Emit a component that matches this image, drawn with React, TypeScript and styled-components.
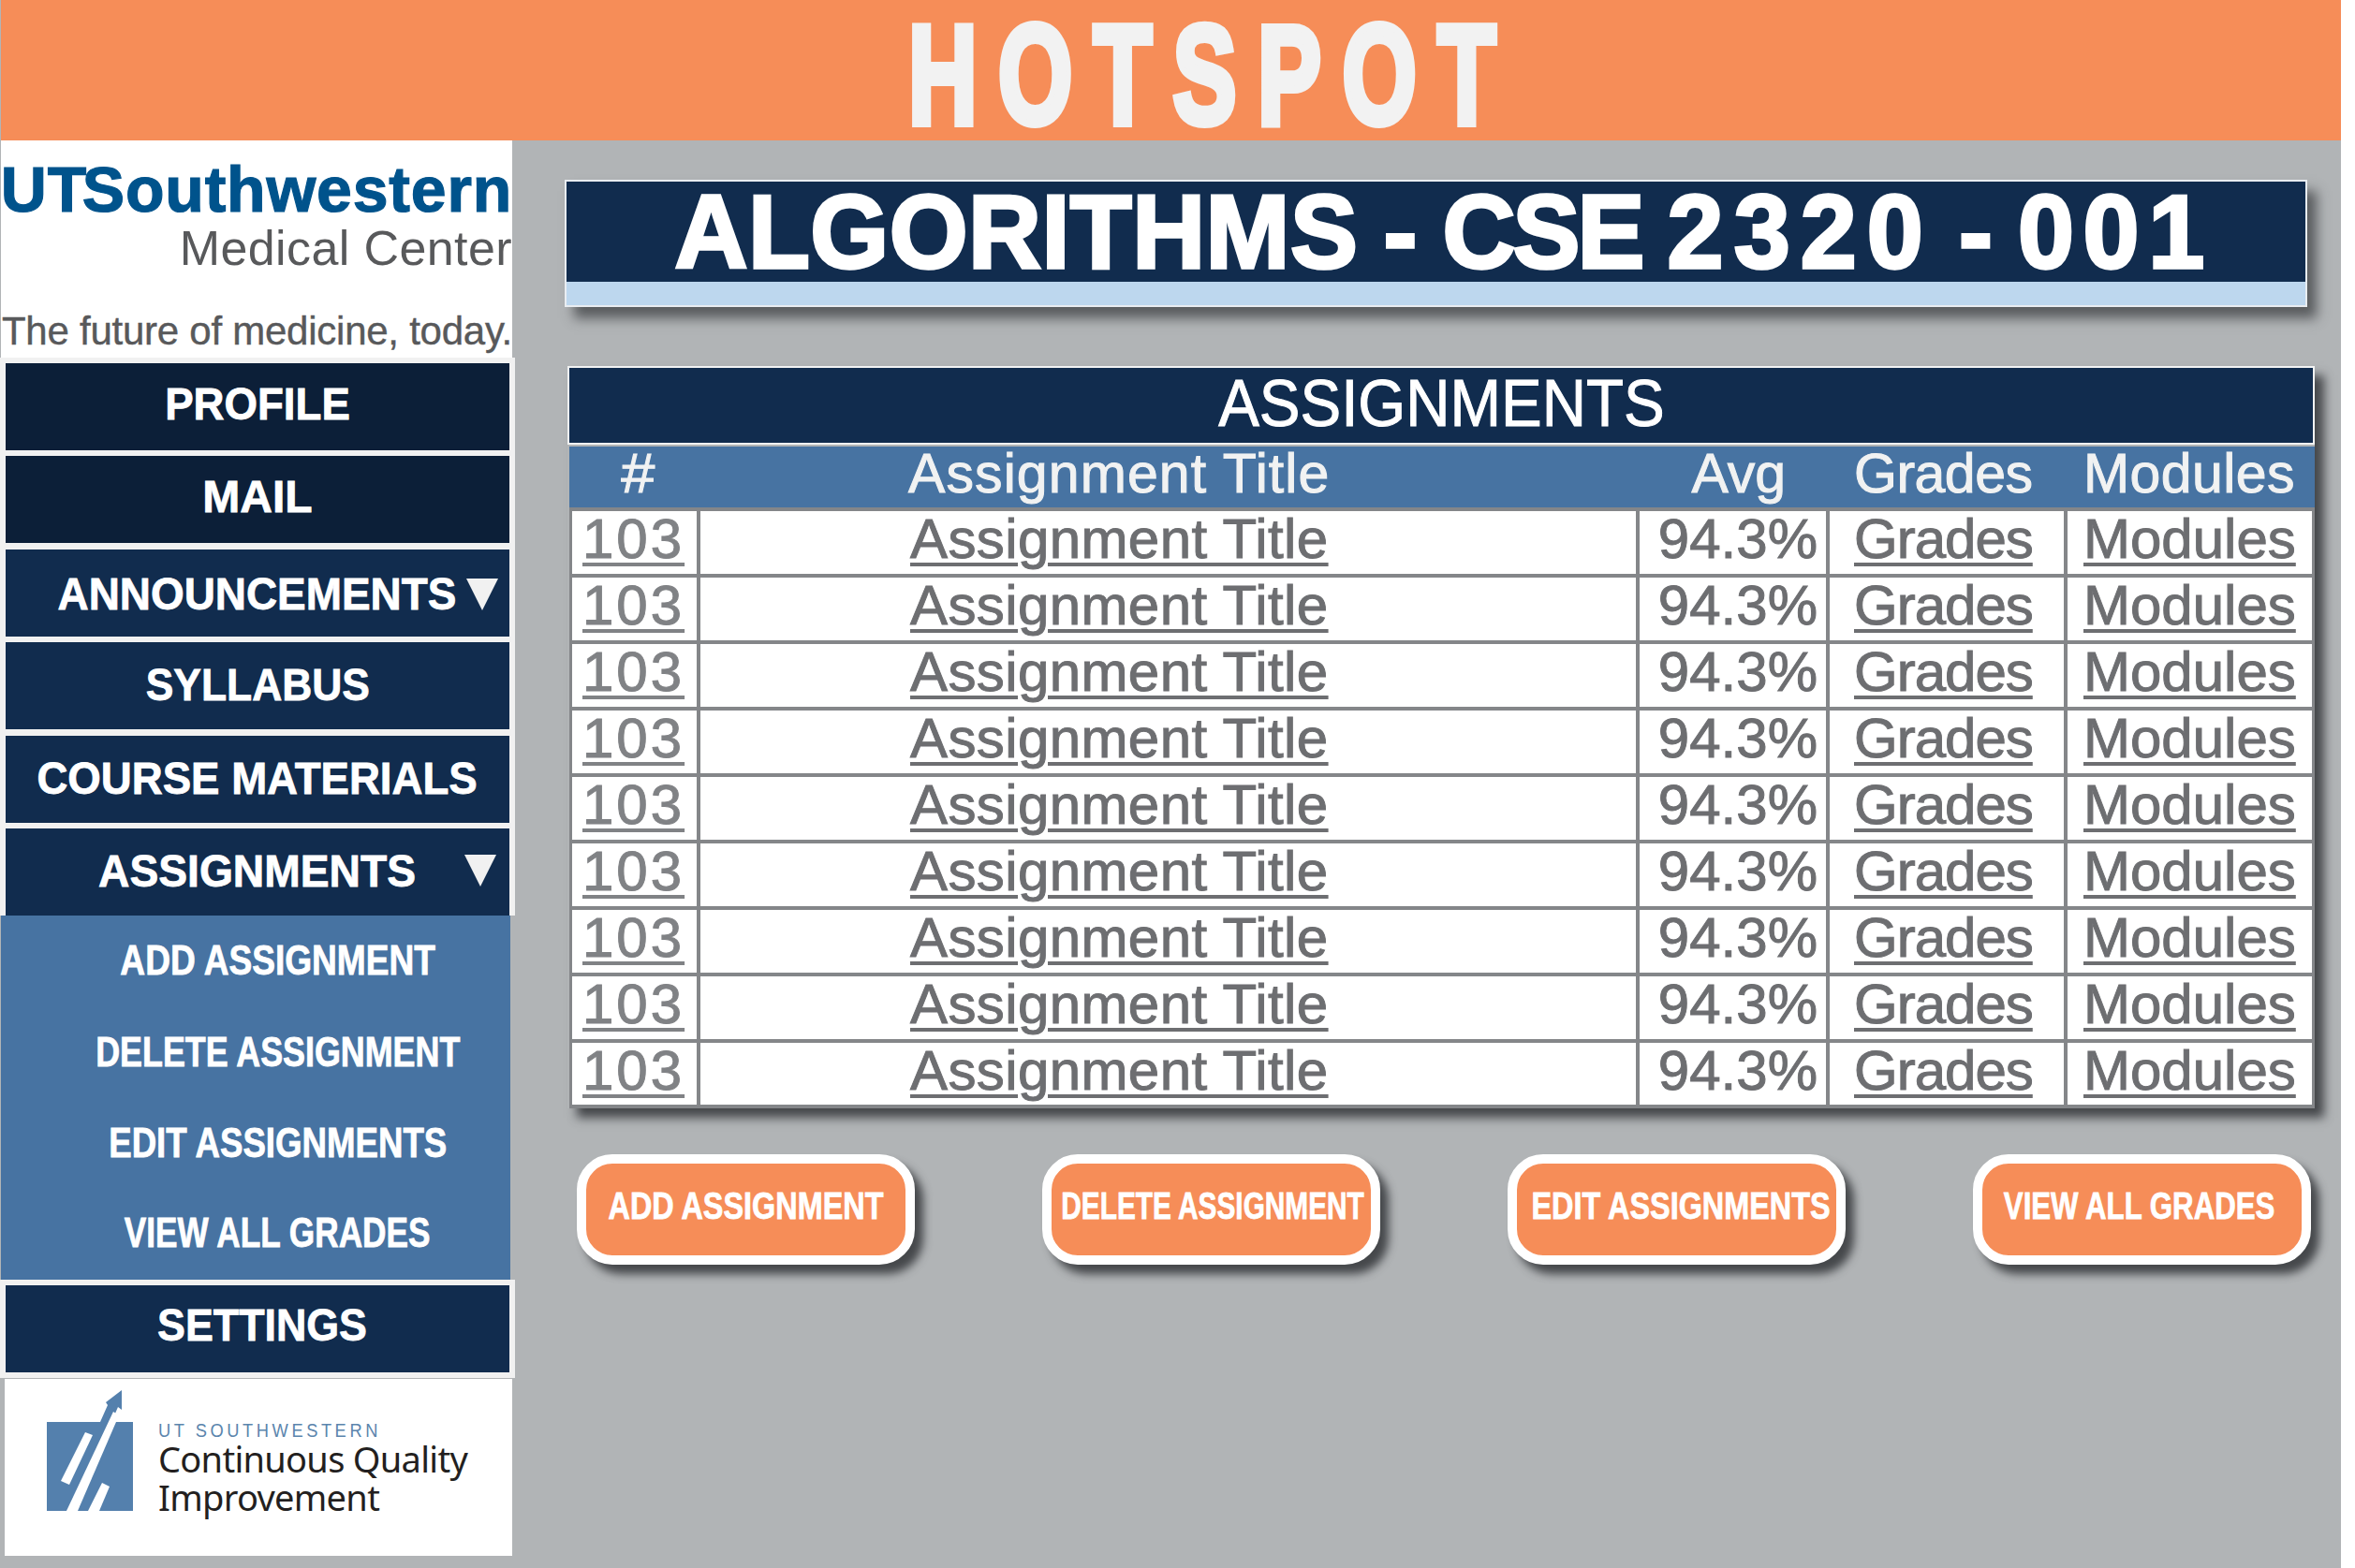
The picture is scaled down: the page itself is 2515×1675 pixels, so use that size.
import React from "react";
import styled, { createGlobalStyle } from "styled-components";

const SANS = `"Liberation Sans", Arial, sans-serif`;

const Global = createGlobalStyle`
  html, body { margin: 0; padding: 0; background: #ffffff; }
  * { box-sizing: border-box; }
`;

const Page = styled.div`
  width: 2500px;
  height: 1675px;
  background: #b1b4b6;
  font-family: ${SANS};
  overflow: hidden;
`;

const Squeeze = styled.span<{ $x: number; $o?: string }>`
  display: inline-block;
  flex: none;
  transform: scaleX(${(p) => p.$x});
  transform-origin: ${(p) => p.$o || "center"};
`;

const Spaced = styled.span<{ $ls: number }>`
  letter-spacing: ${(p) => p.$ls}px;
`;

const TopBar = styled.header`
  height: 150px;
  margin-left: 1px;
  padding: 10px 0 0 90px;
  background: #f68d58;
  display: flex;
  align-items: center;
  justify-content: center;
`;

const Brand = styled.h1`
  margin: 0;
  font-size: 150px;
  line-height: 140px;
  font-weight: 700;
  letter-spacing: 33px;
  color: #f2f2f2;
  -webkit-text-stroke: 8px #f2f2f2;
`;

const Body = styled.div`
  display: flex;
`;

const Sidebar = styled.aside`
  width: 550px;
  flex: none;
  display: flex;
  flex-direction: column;
`;

const LogoPanel = styled.div`
  width: 546px;
  height: 232px;
  margin-left: 1px;
  background: #ffffff;
  display: flex;
  flex-direction: column;
  align-items: flex-end;
  white-space: nowrap;
`;

const LogoMain = styled.div`
  font-size: 68px;
  line-height: 68px;
  margin-top: 18px;
  font-weight: 700;
  letter-spacing: 0.8px;
  word-spacing: -25px;
  color: #00538c;
  -webkit-text-stroke: 1.2px #00538c;
`;

const LogoSub = styled.div`
  font-size: 52px;
  line-height: 52px;
  margin-top: 3px;
  letter-spacing: 0.4px;
  color: #58595b;
`;

const LogoTag = styled.div`
  font-size: 42px;
  line-height: 42px;
  margin-top: 42px;
  letter-spacing: -0.25px;
  color: #58595b;
  -webkit-text-stroke: 0.4px #58595b;
`;

const NavStrip = styled.nav`
  background: #f1f1f1;
  padding: 6px;
  display: flex;
  flex-direction: column;
  gap: 6.4px;
`;

const TopStrip = styled(NavStrip)`
  padding-bottom: 0;
`;

const NavItem = styled.a<{ $dark?: boolean; $pad?: string }>`
  height: 93px;
  display: flex;
  align-items: center;
  justify-content: center;
  padding: ${(p) => p.$pad || "0"};
  gap: 10px;
  background: ${(p) => (p.$dark ? "#0c1f38" : "#112c4e")};
  color: #ffffff;
  font-size: 48px;
  font-weight: 700;
  white-space: nowrap;
  -webkit-text-stroke: 0.8px #ffffff;
`;

const Caret = styled.svg`
  width: 34px;
  height: 34px;
  flex: none;
`;

const CaretGap = styled.span`
  width: 32px;
  flex: none;
`;

const Submenu = styled.div`
  width: 544px;
  margin-left: 1px;
  height: 389px;
  background: #4773a2;
  display: flex;
  flex-direction: column;
`;

const SubItem = styled.a<{ $h: number }>`
  height: ${(p) => p.$h}px;
  display: flex;
  align-items: center;
  justify-content: center;
  padding: 0 0 3px 47px;
  color: #ffffff;
  font-size: 44px;
  font-weight: 700;
  white-space: nowrap;
  -webkit-text-stroke: 0.8px #ffffff;
`;

const CqiPanel = styled.div`
  width: 542px;
  height: 189px;
  margin: 1px 0 0 5px;
  background: #ffffff;
  display: flex;
  align-items: flex-start;
  padding: 11px 0 0 44px;
  gap: 26px;
`;

const CqiMark = styled.svg`
  width: 94px;
  height: 131px;
  flex: none;
`;

const CqiText = styled.div`
  padding-top: 34px;
  white-space: nowrap;
`;

const CqiOrg = styled.div`
  font-size: 21px;
  line-height: 20px;
  letter-spacing: 4.1px;
  color: #5b85ad;
  transform: scaleX(0.87);
  transform-origin: left;
`;

const CqiName = styled.div`
  font-family: "Noto Sans", sans-serif;
  font-size: 38px;
  line-height: 41px;
  letter-spacing: -0.7px;
  color: #231f20;
`;

const Main = styled.main`
  flex: 1;
  display: flex;
  flex-direction: column;
`;

const Banner = styled.div`
  width: 1861px;
  height: 136px;
  margin: 42px 0 0 53px;
  border: 2px solid #e9edf1;
  background: #bdd7ee;
  box-shadow: 10px 12px 12px rgba(60, 63, 66, 0.75);
`;

const BannerTitle = styled.h2`
  margin: 0;
  height: 107px;
  padding-left: 17px;
  background: #112c4e;
  color: #ffffff;
  font-size: 112px;
  line-height: 107px;
  font-weight: 700;
  text-align: center;
  white-space: nowrap;
  word-spacing: -3px;
  -webkit-text-stroke: 3.5px #ffffff;
`;

const Table = styled.section`
  width: 1866px;
  margin: 63px 0 0 56px;
  box-shadow: 10px 10px 10px rgba(50, 53, 56, 0.85);
`;

const TableTitle = styled.h3`
  margin: 0 0 2px;
  height: 84px;
  border: 2px solid #f1f2f2;
  background: #112c4e;
  color: #ffffff;
  font-size: 71px;
  line-height: 76px;
  font-weight: 400;
  text-align: center;
  -webkit-text-stroke: 1px #ffffff;
`;

const HeadRow = styled.div`
  margin-left: 2px;
  height: 65px;
  display: grid;
  grid-template-columns: 137px 1003px 203px 254px 1fr;
  background: #4773a2;
  color: #f1f2f2;
  font-size: 59px;
  line-height: 58px;
  -webkit-text-stroke: 1px #f1f2f2;
`;

const Row = styled.div`
  margin-left: 2px;
  height: 71px;
  display: grid;
  grid-template-columns: 137px 1003px 203px 254px 1fr;
  background: #ffffff;
  border: solid #848689;
  border-width: 4px 3px 0 3px;
  color: #6d6e71;
  font-size: 60px;
  line-height: 60px;
  -webkit-text-stroke: 1px #6d6e71;
  &:last-child { height: 74px; border-bottom-width: 4px; }
`;

const Cell = styled.div<{ $align: string; $pad: number; $line?: boolean; $ls?: number }>`
  display: flex;
  justify-content: ${(p) => p.$align};
  padding: 0 ${(p) => (p.$align === "flex-end" ? p.$pad : 0)}px 0 ${(p) => (p.$align === "flex-start" ? p.$pad : 0)}px;
  border-right: ${(p) => (p.$line ? "4px solid #848689" : "none")};
  letter-spacing: ${(p) => p.$ls ?? 0}px;
`;

const CellLink = styled.span<{ $light?: boolean }>`
  text-decoration: underline;
  text-decoration-thickness: 4px;
  text-underline-offset: 5px;
  color: ${(p) => (p.$light ? "#808285" : "#6d6e71")};
  -webkit-text-stroke-color: ${(p) => (p.$light ? "#808285" : "#6d6e71")};
`;

const Actions = styled.div`
  display: flex;
  gap: 136px;
  margin: 49px 0 0 66px;
`;

const ActionButton = styled.button<{ $dx?: number; $rx?: number }>`
  width: 361px;
  height: 118px;
  flex: none;
  display: flex;
  align-items: center;
  justify-content: center;
  padding: 0 ${(p) => p.$rx ?? 0}px 8px ${(p) => p.$dx ?? 0}px;
  border: 10px solid #ffffff;
  border-radius: 38px;
  background: #f68d58;
  color: #ffffff;
  font-family: ${SANS};
  font-size: 40px;
  font-weight: 700;
  white-space: nowrap;
  -webkit-text-stroke: 0.8px #ffffff;
  box-shadow: 9px 10px 10px rgba(50, 53, 56, 0.85);
`;

const Triangle = () => (
  <Caret viewBox="0 0 34 34">
    <path d="M0 0 H34 L17 34 Z" fill="#f1f1f1" />
  </Caret>
);

const rows = Array.from({ length: 9 }, (_, i) => i);

export default function App() {
  return (
    <Page>
      <Global />
      <TopBar>
        <Brand>
          <Squeeze $x={0.68}>HOTSPOT</Squeeze>
        </Brand>
      </TopBar>
      <Body>
        <Sidebar>
          <LogoPanel>
            <LogoMain>UT Southwestern</LogoMain>
            <LogoSub>Medical Center</LogoSub>
            <LogoTag>The future of medicine, today.</LogoTag>
          </LogoPanel>
          <TopStrip>
            <NavItem $dark $pad="0 0 6px"><Squeeze $x={0.95}>PROFILE</Squeeze></NavItem>
            <NavItem $dark $pad="0 0 6px">MAIL</NavItem>
            <NavItem $pad="3px 0 0 24px">
              <Squeeze $x={0.956} $o="right">ANNOUNCEMENTS</Squeeze>
              <Triangle />
            </NavItem>
            <NavItem $pad="0 0 2px"><Squeeze $x={0.925}>SYLLABUS</Squeeze></NavItem>
            <NavItem $pad="0 0 1px"><Squeeze $x={0.95}>COURSE MATERIALS</Squeeze></NavItem>
            <NavItem $pad="0 0 2px 72px">
              <Squeeze $x={0.963} $o="right">ASSIGNMENTS</Squeeze>
              <CaretGap />
              <Triangle />
            </NavItem>
          </TopStrip>
          <Submenu>
            <SubItem $h={99}><Squeeze $x={0.843}>ADD ASSIGNMENT</Squeeze></SubItem>
            <SubItem $h={98}><Squeeze $x={0.815}>DELETE ASSIGNMENT</Squeeze></SubItem>
            <SubItem $h={96}><Squeeze $x={0.833}>EDIT ASSIGNMENTS</Squeeze></SubItem>
            <SubItem $h={96}><Squeeze $x={0.8}>VIEW ALL GRADES</Squeeze></SubItem>
          </Submenu>
          <NavStrip>
            <NavItem $pad="0 0 8px 10px"><Squeeze $x={0.933}>SETTINGS</Squeeze></NavItem>
          </NavStrip>
          <CqiPanel>
            <CqiMark viewBox="0 0 94 131">
              <path d="M1 35 H93 V130 H1 Z" fill="#5480ad" />
              <path d="M58 35 L66 17 L64 14 L81 1 L81 22 L77 19 L70 35 Z" fill="#5480ad" />
              <path d="M22 130 H34 L78 28 L72 24 Z" fill="#ffffff" />
              <path d="M16 98 L25 102 L50 49 L42 46 Z" fill="#ffffff" />
              <path d="M45 130 H57 L68 104 L60 100 Z" fill="#ffffff" />
            </CqiMark>
            <CqiText>
              <CqiOrg>UT SOUTHWESTERN</CqiOrg>
              <CqiName>Continuous Quality</CqiName>
              <CqiName>Improvement</CqiName>
            </CqiText>
          </CqiPanel>
        </Sidebar>
        <Main>
          <Banner>
            <BannerTitle>
              <Squeeze $x={0.963}>
                <Spaced $ls={0.5}>ALGORITHMS</Spaced> - <Spaced $ls={-3}>CSE</Spaced>{" "}
                <Spaced $ls={11.5}>2320</Spaced> - <Spaced $ls={10}>001</Spaced>
              </Squeeze>
            </BannerTitle>
          </Banner>
          <Table>
            <TableTitle>
              <Squeeze $x={0.922}>ASSIGNMENTS</Squeeze>
            </TableTitle>
            <HeadRow>
              <Cell $align="center" $pad={0}>
                <Squeeze $x={1.1} style={{ marginLeft: 10 }}>#</Squeeze>
              </Cell>
              <Cell $align="flex-start" $pad={225} $ls={1.1}>Assignment Title</Cell>
              <Cell $align="flex-end" $pad={44}>Avg</Cell>
              <Cell $align="flex-start" $pad={29} $ls={-0.5}>Grades</Cell>
              <Cell $align="flex-start" $pad={20} $ls={0.4}>Modules</Cell>
            </HeadRow>
            <div>
              {rows.map((i) => (
                <Row key={i}>
                  <Cell $align="flex-start" $pad={11} $line $ls={3}>
                    <CellLink $light>103</CellLink>
                  </Cell>
                  <Cell $align="flex-start" $pad={224} $line $ls={0.4}>
                    <CellLink>Assignment Title</CellLink>
                  </Cell>
                  <Cell $align="flex-end" $pad={9} $line>94.3%</Cell>
                  <Cell $align="flex-start" $pad={26} $ls={-1} $line>
                    <CellLink>Grades</CellLink>
                  </Cell>
                  <Cell $align="flex-start" $pad={17}>
                    <CellLink>Modules</CellLink>
                  </Cell>
                </Row>
              ))}
            </div>
          </Table>
          <Actions>
            <ActionButton><Squeeze $x={0.81}>ADD ASSIGNMENT</Squeeze></ActionButton>
            <ActionButton $dx={4}><Squeeze $x={0.745}>DELETE ASSIGNMENT</Squeeze></ActionButton>
            <ActionButton $dx={10}><Squeeze $x={0.81}>EDIT ASSIGNMENTS</Squeeze></ActionButton>
            <ActionButton $rx={6}><Squeeze $x={0.78}>VIEW ALL GRADES</Squeeze></ActionButton>
          </Actions>
        </Main>
      </Body>
    </Page>
  );
}
